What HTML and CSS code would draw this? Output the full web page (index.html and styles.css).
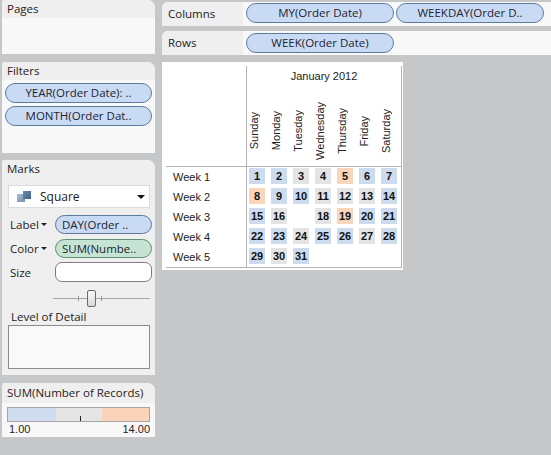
FILE: index.html
```html
<!DOCTYPE html>
<html>
<head>
<meta charset="utf-8">
<link rel="stylesheet" href="styles.css">
</head>
<body>
<div class="app">
  <div class="side">
    <section class="card pages">
      <div class="card-h">Pages</div>
    </section>
    <section class="card filters">
      <div class="card-h">Filters</div>
      <div class="pill blue fpill">YEAR(Order Date): ..</div>
      <div class="pill blue fpill">MONTH(Order Dat..</div>
    </section>
    <section class="card marks">
      <div class="card-h">Marks</div>
      <div class="dropdown">
        <svg class="sq-icon" width="14" height="13" viewBox="0 0 14 13">
          <defs>
            <linearGradient id="g1" x1="0" y1="0" x2="1" y2="1">
              <stop offset="0" stop-color="#a9bdd3"/>
              <stop offset="1" stop-color="#7591b2"/>
            </linearGradient>
            <linearGradient id="g2" x1="0" y1="0" x2="1" y2="1">
              <stop offset="0" stop-color="#6f8db0"/>
              <stop offset="1" stop-color="#3f5f84"/>
            </linearGradient>
          </defs>
          <rect x="0" y="4" width="8" height="8" fill="url(#g1)"/>
          <rect x="6" y="1" width="8" height="8" fill="url(#g2)"/>
        </svg>
        <span class="dd-text">Square</span>
        <span class="dd-arrow"></span>
      </div>
      <div class="mrow">
        <span class="mlabel">Label<span class="tri"></span></span>
        <div class="pill blue mpill">DAY(Order ..</div>
      </div>
      <div class="mrow">
        <span class="mlabel">Color<span class="tri"></span></span>
        <div class="pill green mpill">SUM(Numbe..</div>
      </div>
      <div class="mrow">
        <span class="mlabel">Size</span>
        <div class="sizebox"></div>
      </div>
      <div class="slider">
        <div class="s-line"></div>
        <div class="s-tick t1"></div>
        <div class="s-tick t2"></div>
        <div class="s-thumb"></div>
      </div>
      <div class="lod-label">Level of Detail</div>
      <div class="lod-box"></div>
    </section>
    <section class="card legend">
      <div class="card-h">SUM(Number of Records)</div>
      <div class="ramp">
        <div class="seg s-blue"></div>
        <div class="seg s-gray"></div>
        <div class="seg s-orange"></div>
        <div class="ramp-tick"></div>
      </div>
      <div class="ramp-labels"><span>1.00</span><span>14.00</span></div>
    </section>
  </div>

  <div class="main">
    <div class="shelf cols">
      <div class="shelf-l">Columns</div>
      <div class="shelf-b">
        <div class="pill blue spill">MY(Order Date)</div>
        <div class="pill blue spill">WEEKDAY(Order D..</div>
      </div>
    </div>
    <div class="shelf rows">
      <div class="shelf-l">Rows</div>
      <div class="shelf-b">
        <div class="pill blue spill">WEEK(Order Date)</div>
      </div>
    </div>

    <div class="view">
      <div class="corner"></div>
      <div class="colhead">
        <div class="title">January 2012</div>
        <div class="days">
          <span>Sunday</span><span>Monday</span><span>Tuesday</span><span>Wednesday</span><span>Thursday</span><span>Friday</span><span>Saturday</span>
        </div>
      </div>
      <div class="rowhead">
        <div>Week 1</div><div>Week 2</div><div>Week 3</div><div>Week 4</div><div>Week 5</div>
      </div>
      <div class="cells">
        <div class="c b">1</div><div class="c b">2</div><div class="c g">3</div><div class="c g">4</div><div class="c o">5</div><div class="c b">6</div><div class="c b">7</div>
        <div class="c o">8</div><div class="c b">9</div><div class="c b">10</div><div class="c g">11</div><div class="c g">12</div><div class="c g">13</div><div class="c b">14</div>
        <div class="c b">15</div><div class="c g">16</div><div class="c e"></div><div class="c g">18</div><div class="c o">19</div><div class="c b">20</div><div class="c b">21</div>
        <div class="c b">22</div><div class="c b">23</div><div class="c g">24</div><div class="c b">25</div><div class="c b">26</div><div class="c g">27</div><div class="c b">28</div>
        <div class="c b">29</div><div class="c g">30</div><div class="c b">31</div>
      </div>
    </div>
  </div>
</div>
</body>
</html>
```
FILE: styles.css
```css
html, body {
  margin: 0;
  padding: 0;
}
body {
  width: 551px;
  height: 455px;
  overflow: hidden;
  background: #c6c7c9;
  font-family: "Open Sans", "Noto Sans", sans-serif;
  font-size: 11px;
  color: #222;
}
.app {
  display: flex;
  gap: 7px;
  padding-left: 2px;
  height: 455px;
}

/* ---------- side cards ---------- */
.side {
  width: 153px;
  flex: none;
  display: flex;
  flex-direction: column;
}
.card {
  background: #f8f8f8;
  border-radius: 3px 8px 0 0;
  overflow: hidden;
  box-sizing: border-box;
}
.card-h {
  height: 18px;
  line-height: 17px;
  padding-left: 5px;
  background: #efefef;
  color: #2a2020;
  font-size: 11.5px;
}
.pages { height: 54px; margin-bottom: 8px; }
.filters { height: 91px; margin-bottom: 7px; }
.marks { height: 215px; margin-bottom: 8px; background: #efefef; }
.legend { height: 54px; }

.pill {
  box-sizing: border-box;
  height: 20px;
  line-height: 18px;
  border-radius: 10px;
  text-align: center;
  white-space: nowrap;
  overflow: hidden;
  color: #1e2430;
}
.pill.blue {
  background: #c9dbf4;
  border: 1px solid #5b7b9c;
}
.pill.green {
  background: #c6e4d3;
  border: 1px solid #5e8f74;
}
.fpill {
  width: 147px;
  margin-left: 3px;
  margin-top: 3px;
  font-size: 11.5px;
}

/* marks */
.dropdown {
  box-sizing: border-box;
  width: 142px;
  height: 23px;
  margin: 7px 0 0 6px;
  background: #fff;
  border: 1px solid #dcdcdc;
  display: flex;
  align-items: center;
  position: relative;
}
.sq-icon {
  margin-left: 8px;
}
.dd-text {
  margin-left: 9px;
  font-size: 12px;
  color: #1a1a1a;
}
.dd-arrow {
  position: absolute;
  right: 4px;
  top: 9px;
  width: 0;
  height: 0;
  border-left: 4px solid transparent;
  border-right: 4px solid transparent;
  border-top: 4px solid #111;
}
.mrow {
  display: flex;
  align-items: center;
  height: 20px;
  margin-top: 4px;
}
.dropdown + .mrow { margin-top: 6px; }
.mlabel {
  width: 45px;
  padding-left: 8px;
  flex: none;
  display: flex;
  align-items: center;
  color: #1a1a1a;
  font-size: 11.5px;
}
.tri {
  display: inline-block;
  width: 0;
  height: 0;
  margin-left: 2px;
  margin-top: 1px;
  border-left: 3px solid transparent;
  border-right: 3px solid transparent;
  border-top: 3px solid #222;
}
.mpill {
  width: 97px;
  height: 19px;
  line-height: 17px;
  text-align: left;
  padding-left: 6px;
  font-size: 11.5px;
}
.sizebox {
  box-sizing: border-box;
  width: 97px;
  height: 20px;
  background: #fff;
  border: 1px solid #7c7c7c;
  border-radius: 7px;
}
.slider {
  position: relative;
  height: 20px;
  margin: 6px 0 0 51px;
  width: 97px;
}
.s-line {
  position: absolute;
  left: 0;
  right: 0;
  top: 10px;
  height: 1px;
  background: #a6a6a6;
}
.s-tick {
  position: absolute;
  top: 8px;
  width: 1px;
  height: 5px;
  background: #9a9a9a;
}
.t1 { left: 25px; }
.t2 { left: 48px; }
.s-thumb {
  position: absolute;
  left: 34px;
  top: 2px;
  box-sizing: border-box;
  width: 9px;
  height: 17px;
  border: 1px solid #6c6c6c;
  border-radius: 2px;
  background: linear-gradient(#fafafa, #d6d6d6);
}
.lod-label {
  height: 16px;
  line-height: 16px;
  margin-top: 1px;
  padding-left: 9px;
  color: #1a1a1a;
  font-size: 11.5px;
}
.lod-box {
  box-sizing: border-box;
  width: 142px;
  height: 44px;
  margin-left: 6px;
  background: #f9f9f9;
  border: 1px solid #8c8c8c;
}

/* legend */
.legend .card-h {
  height: 20px;
  line-height: 20px;
}
.ramp {
  position: relative;
  box-sizing: border-box;
  display: flex;
  width: 143px;
  height: 15px;
  margin: 4px 0 0 5px;
  border: 1px solid #a6a6a6;
}
.seg { height: 100%; }
.s-blue { width: 48px; background: #cfdcef; }
.s-gray { width: 46px; background: #e5e5e5; }
.s-orange { flex: 1; background: #f9d4b8; }
.ramp-tick {
  position: absolute;
  left: 72px;
  bottom: 0;
  width: 1px;
  height: 5px;
  background: #222;
}
.ramp-labels {
  display: flex;
  justify-content: space-between;
  width: 141px;
  margin-left: 7px;
  font-family: "Liberation Sans", Arial, sans-serif;
  font-size: 11px;
  line-height: 14px;
  color: #2a1a2a;
}

/* ---------- main ---------- */
.main {
  flex: 1;
  display: flex;
  flex-direction: column;
  min-width: 0;
}
.shelf {
  display: flex;
  height: 24px;
  background: #f8f8f8;
  border-radius: 6px 0 0 0;
  overflow: hidden;
}
.shelf.cols { margin-top: 2px; }
.shelf.rows { margin-top: 5px; }
.shelf-l {
  width: 75px;
  flex: none;
  padding-left: 6px;
  background: #efefef;
  line-height: 23px;
  font-size: 11.5px;
  color: #1a1a1a;
}
.shelf-b {
  display: flex;
  gap: 2px;
  padding: 1px 0 0 3px;
}
.rows .shelf-b { padding-top: 2px; }
.spill {
  width: 148px;
  flex: none;
  font-size: 11.5px;
}

/* view */
.view {
  margin-top: 7px;
  width: 241px;
  height: 208px;
  box-sizing: border-box;
  padding: 4px 1px 2px 4px;
  background: #fff;
  display: grid;
  grid-template-columns: 80px 156px;
  grid-template-rows: 100px 102px;
  font-family: "Liberation Sans", Arial, sans-serif;
  font-size: 11px;
  color: #222;
}
.colhead {
  border-left: 1px solid #b4b4b4;
  border-right: 1px solid #b4b4b4;
}
.title {
  height: 22px;
  box-sizing: border-box;
  padding-top: 4px;
  line-height: 13px;
  text-align: center;
}
.days {
  height: 78px;
  box-sizing: border-box;
  padding-top: 8px;
  display: grid;
  grid-template-columns: repeat(7, 22px);
  align-items: center;
  justify-items: center;
}
.days span {
  writing-mode: vertical-rl;
  transform: rotate(180deg);
  line-height: 13px;
  margin-right: 8px;
}
.rowhead {
  border-top: 1px solid #b4b4b4;
  border-bottom: 1px solid #b4b4b4;
  padding-left: 7px;
}
.rowhead div {
  height: 20px;
  line-height: 20px;
}
.cells {
  border: 1px solid #b4b4b4;
  display: grid;
  grid-template-columns: repeat(7, 22px);
  grid-template-rows: repeat(5, 20px);
}
.c {
  width: 16px;
  height: 16px;
  margin: 1px 0 0 2px;
  line-height: 16px;
  text-align: center;
  font-weight: bold;
  color: #111;
}
.c.b { background: #cddbef; }
.c.g { background: #e4e4e4; }
.c.o { background: #f9d5ba; }
.c.e { background: transparent; }
```
